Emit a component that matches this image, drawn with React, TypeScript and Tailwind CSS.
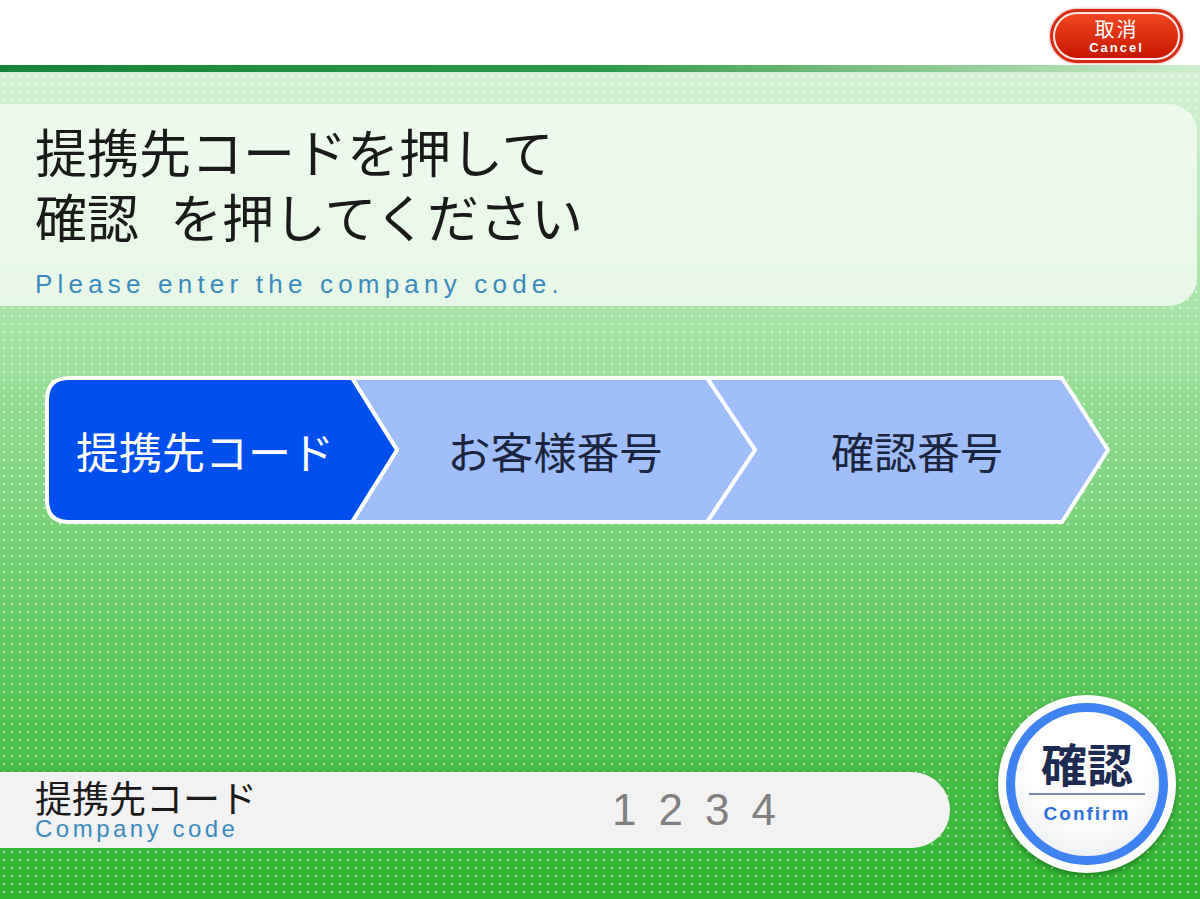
import React from "react";

const jp = "font-['Noto_Sans_CJK_JP','Noto_Sans',sans-serif]";
const en = "font-['Liberation_Sans','DejaVu_Sans',sans-serif]";

function CancelButton() {
  return (
    <button className="rounded-full bg-[#d82a14] p-[3px] shadow-[0_0_3px_rgba(200,30,10,0.6)]">
      <div className="flex h-[48px] w-[127px] flex-col items-center justify-center rounded-full border-2 border-white/90 bg-gradient-to-b from-[#f0451f] to-[#c81200] text-white">
        <span className={`${jp} text-[20px] leading-[24px] tracking-[2px]`}>取消</span>
        <span className={`${en} text-[13px] font-bold leading-[14px] tracking-[2px]`}>Cancel</span>
      </div>
    </button>
  );
}

function Stepper() {
  const steps = ["提携先コード", "お客様番号", "確認番号"];
  return (
    <div className="relative ml-[45px] h-[148px] w-[1067px]">
      {/* chevron shapes */}
      <svg className="absolute inset-0" width="1067" height="148" viewBox="0 0 1067 148">
        <g stroke="#ffffff" strokeWidth="4" strokeLinejoin="round">
          <path d="M662,2 H1017 L1063,74 L1017,146 H662 L710,74 Z" fill="#9fbefa" />
          <path d="M307,2 H662 L710,74 L662,146 H307 L352,74 Z" fill="#9fbefa" />
          <path d="M24,2 H307 L352,74 L307,146 H24 Q2,146 2,124 V24 Q2,2 24,2 Z" fill="#0050f0" />
        </g>
      </svg>
      <div className={`${jp} relative flex h-full items-center text-[43px] leading-none`}>
        <div className="w-[320px] text-center text-white">{steps[0]}</div>
        <div className="ml-[30px] w-[320px] text-center text-[#1c2540]">{steps[1]}</div>
        <div className="ml-[42px] w-[320px] text-center text-[#1c2540]">{steps[2]}</div>
      </div>
    </div>
  );
}

function ConfirmButton() {
  return (
    <button className="flex h-[178px] w-[178px] items-center justify-center rounded-full bg-white shadow-[0_3px_6px_rgba(0,60,0,0.45)]">
      <div className="flex h-[162px] w-[162px] items-center justify-center rounded-full border-[9px] border-[#3f82f2] bg-[radial-gradient(circle_at_50%_35%,#ffffff_45%,#e6e8ec_100%)]">
        <div className="flex flex-col items-center">
          <span className={`${jp} text-[46px] font-bold leading-none text-[#1d2b52]`}>確認</span>
          <div className="mt-[8px] h-[2px] w-[116px] bg-[#7a88a8]" />
          <span className={`${en} mt-[5px] text-[19px] font-bold tracking-[2px] text-[#2f6fe6]`}>Confirm</span>
        </div>
      </div>
    </button>
  );
}

export default function App() {
  return (
    <div className="flex h-[899px] w-[1200px] flex-col overflow-hidden bg-white">
      {/* top bar */}
      <div className="flex h-[65px] shrink-0 items-start justify-end pr-[17px] pt-[9px]">
        <CancelButton />
      </div>
      <div className="h-[7px] shrink-0 bg-gradient-to-r from-[#16853a] via-[#2a9a48] to-[#cfeecf]" />

      {/* green dotted area */}
      <div className="flex flex-1 flex-col [background-image:radial-gradient(circle,rgba(255,255,255,0.55)_1px,transparent_1.6px),linear-gradient(to_bottom,#d5f1d5_0%,#a6e3a6_30%,#8ad98a_45%,#5ec85e_70%,#2fb42f_100%)] [background-size:8px_8px,100%_100%] pt-[32px]">
        {/* instruction panel */}
        <div className="mr-[3px] h-[202px] rounded-r-[28px] bg-[#f2faf2]/85 pl-[35px] pt-[14px]">
          <div className={`${jp} text-[52px] leading-[65px] text-[#1a1a1a]`}>
            <div>提携先コードを押して</div>
            <div>
              確認<span className="ml-[31px]">を押してください</span>
            </div>
          </div>
          <div className={`${en} mt-[21px] text-[26px] leading-[30px] tracking-[5.2px] text-[#3a8bbd]`}>
            Please enter the company code.
          </div>
        </div>

        {/* steps */}
        <div className="mt-[70px]">
          <Stepper />
        </div>

        {/* input row */}
        <div className="mt-[171px] flex items-start">
          <div className="mt-[77px] flex h-[76px] w-[950px] items-center rounded-r-full bg-[#f2f2f2] pl-[35px] shadow-[0_-1px_2px_rgba(0,0,0,0.15)]">
            <div className="flex w-[577px] flex-col">
              <span className={`${jp} text-[37px] leading-[38px] text-[#1a1a1a]`}>提携先コード</span>
              <span className={`${en} text-[24px] leading-[26px] tracking-[3.5px] text-[#3a8bbd]`}>Company code</span>
            </div>
            <span className={`${en} text-[44px] tracking-[22px] text-[#808080]`}>1234</span>
          </div>
          <div className="ml-[48px]">
            <ConfirmButton />
          </div>
        </div>
      </div>
    </div>
  );
}
